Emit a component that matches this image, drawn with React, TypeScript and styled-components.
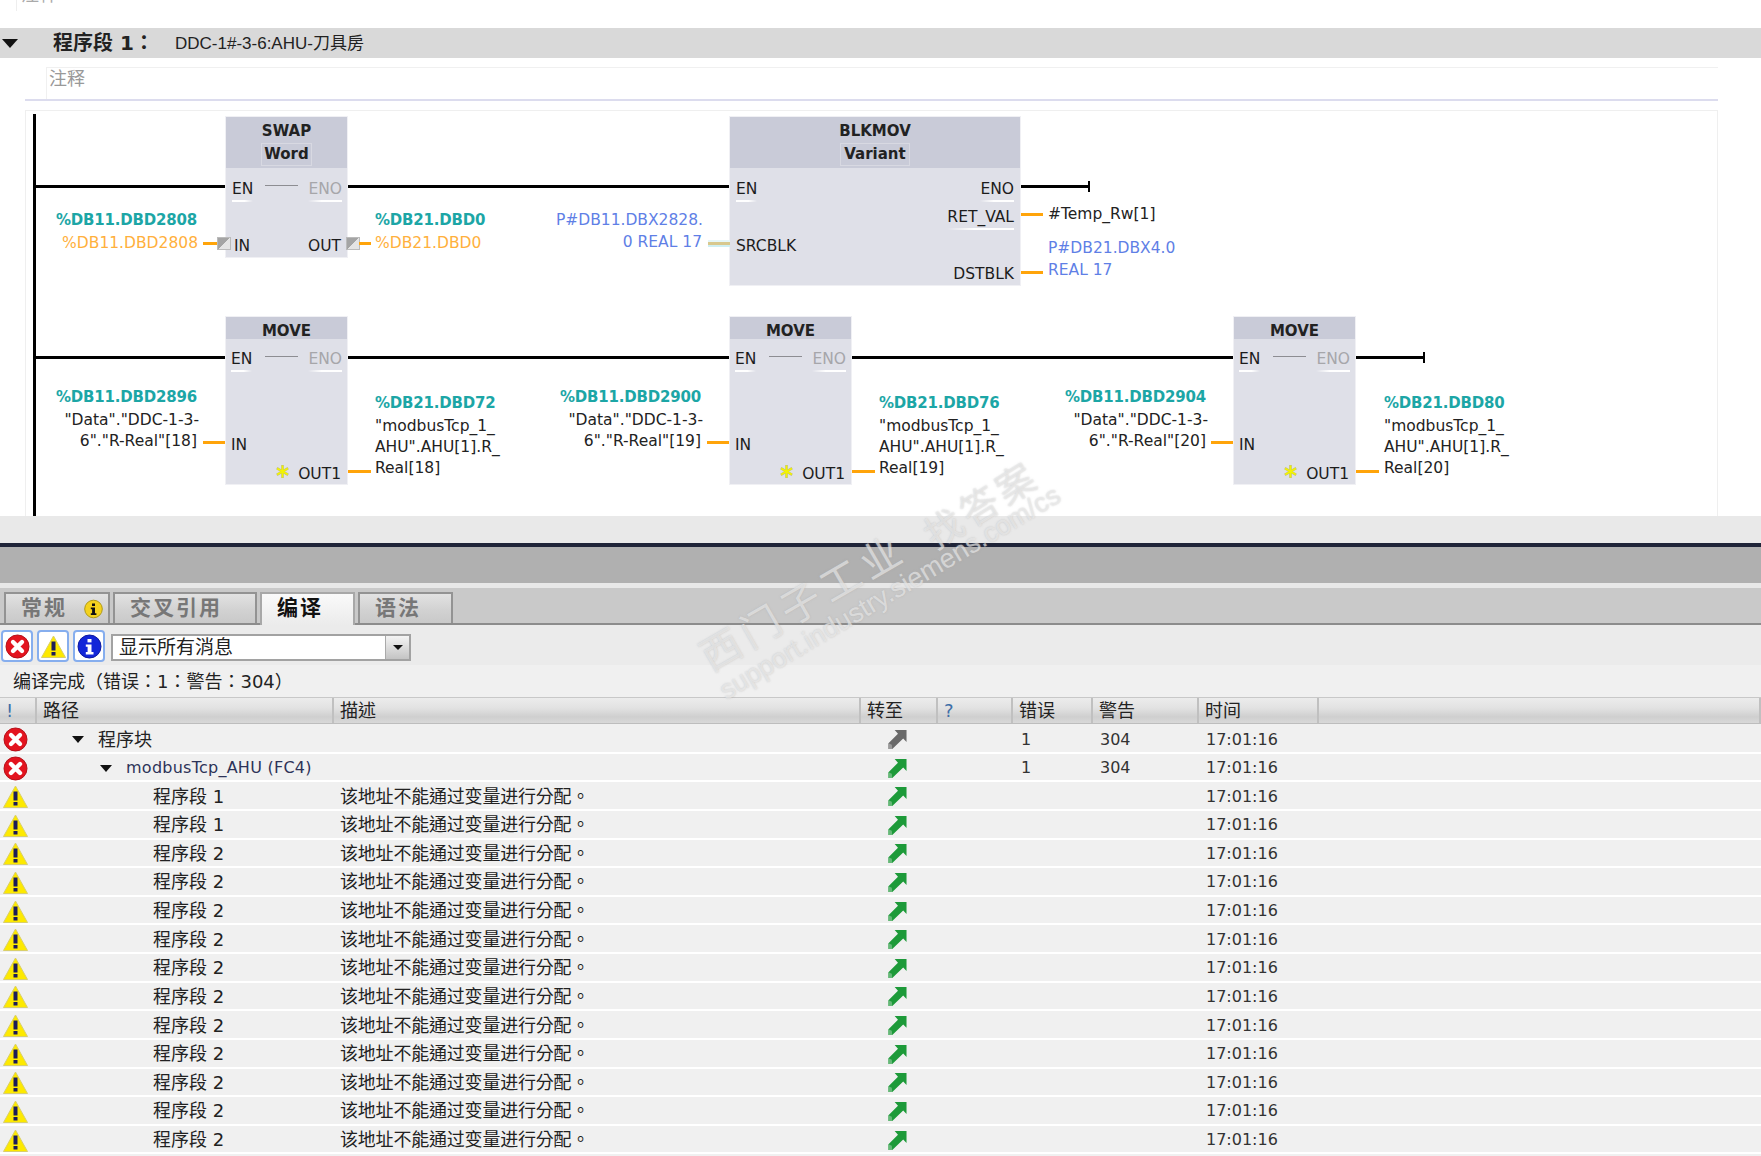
import React from "react";
import styled, { createGlobalStyle, css } from "styled-components";

const FONT = `"DejaVu Sans", "Noto Sans CJK TC", sans-serif`;
const CANVAS_W = 1693;

const Global = createGlobalStyle`
  html, body { margin: 0; padding: 0; background: #fff; }
  body { font-family: ${FONT}; color: #222; }
`;

const Page = styled.div`
  position: relative;
  width: 1761px;
  height: 1156px;
  overflow: hidden;
  display: flex;
  flex-direction: column;
  background: #fff;
`;

const TopStub = styled.div`
  height: 11px;
  margin: 0 0 17px 16px;
  padding-left: 4px;
  border-left: 1px solid #eee;
  overflow: hidden;
  color: #aaa;
  font-size: 18px;
  line-height: 20px;
`;
const TopStubText = styled.div`
  margin-top: -15px;
`;

const NetworkHeader = styled.div`
  height: 30px;
  box-sizing: border-box;
  flex: none;
  background: #d9d9d9;
  display: flex;
  align-items: center;
  padding: 0 0 3px 2px;
`;
const HeaderCaret = styled.div`
  width: 0;
  height: 0;
  border-left: 8px solid transparent;
  border-right: 8px solid transparent;
  border-top: 9px solid #111;
  margin: 3px 35px 0 0;
`;
const NetworkTitle = styled.div`
  font-size: 20px;
  font-weight: 700;
  width: 122px;
`;
const NetworkName = styled.div`
  font-family: "Liberation Sans", "Noto Sans CJK TC", sans-serif;
  font-size: 17px;
`;

const CommentBox = styled.div`
  flex: none;
  height: 31px;
  margin: 9px 43px 0 46px;
  padding-left: 2px;
  border-top: 1px solid #f0f0f0;
  border-left: 1px solid #f0f0f0;
  color: #999;
  font-size: 18px;
  line-height: 22px;
`;
const CommentDivider = styled.div`
  flex: none;
  height: 2px;
  margin: 0 43px 0 25px;
  background: #dcdcee;
`;

const Ladder = styled.div`
  position: relative;
  flex: none;
  box-sizing: border-box;
  width: ${CANVAS_W}px;
  height: 406px;
  margin: 9px 0 0 25px;
  border-top: 1px solid #efefef;
  border-left: 1px solid #efefef;
  border-right: 1px solid #efefef;
  overflow: hidden;
  font-size: 15.5px;
  line-height: 20px;
`;

const Wire = styled.div<{ $x: number; $y: number; $w: number; $h?: number; $color?: string; $glow?: boolean }>`
  position: absolute;
  left: ${(p) => p.$x - 26}px;
  top: ${(p) => p.$y - 111 - (p.$h ?? 3) / 2}px;
  width: ${(p) => p.$w}px;
  height: ${(p) => p.$h ?? 3}px;
  background: ${(p) => p.$color ?? "#000"};
  ${(p) => p.$glow && css`box-shadow: 0 2px 0 #cfeff2, 0 -2px 0 #e6f6f7;`}
`;

const Label = styled.span<{ $x?: number; $rx?: number; $y: number; $tone?: string; $bold?: boolean }>`
  position: absolute;
  top: ${(p) => p.$y - 120}px;
  white-space: nowrap;
  ${(p) => (p.$rx !== undefined ? css`right: ${CANVAS_W - 2 - (p.$rx - 26)}px;` : css`left: ${(p.$x ?? 0) - 26}px;`)}
  color: ${(p) => p.$tone ?? "#222"};
  font-weight: ${(p) => (p.$bold ? 700 : 400)};
  ${(p) => p.$bold && css`font-size: 15px; letter-spacing: -0.2px;`}
`;

const Conn = styled.div<{ $x: number; $y: number }>`
  position: absolute;
  left: ${(p) => p.$x - 26}px;
  top: ${(p) => p.$y - 111}px;
  box-sizing: border-box;
  width: 14px;
  height: 13px;
  border: 1px solid #bbb;
  background: linear-gradient(135deg, #a4a4a4 50%, #e4e4e4 50%);
`;

const Block = styled.div<{ $x: number; $y: number; $w: number; $h: number }>`
  position: absolute;
  left: ${(p) => p.$x - 26}px;
  top: ${(p) => p.$y - 111}px;
  width: ${(p) => p.$w}px;
  height: ${(p) => p.$h}px;
  background: #dfe0e8;
  box-shadow: 0 0 0 1px #f0f0f4;
`;
const BlockHead = styled.div<{ $h: number }>`
  height: ${(p) => p.$h}px;
  background: #c9cbd8;
  display: flex;
  flex-direction: column;
  align-items: center;
  padding-top: 3px;
  box-sizing: border-box;
`;
const BlockTitle = styled.div`
  font-weight: 700;
  font-size: 15px;
  line-height: 22px;
`;
const BlockType = styled.div<{ $w: number }>`
  width: ${(p) => p.$w}px;
  height: 23px;
  margin-top: 1px;
  box-sizing: border-box;
  border: 1px solid #d8d9e2;
  text-align: center;
  font-weight: 700;
  font-size: 15px;
  line-height: 21px;
`;
const Pin = styled.span<{ $l?: number; $r?: number; $y: number; $muted?: boolean; $under?: boolean }>`
  position: absolute;
  top: ${(p) => p.$y - 9}px;
  ${(p) => (p.$r !== undefined ? css`right: ${p.$r}px;` : css`left: ${p.$l ?? 6}px;`)}
  color: ${(p) => (p.$muted ? "#a6a6aa" : "#1c1c1c")};
  ${(p) =>
    p.$under &&
    css`
      &::after {
        content: "";
        position: absolute;
        left: 0;
        right: 0;
        bottom: -3px;
        height: 2px;
        background: linear-gradient(${p.$r !== undefined ? "to left" : "to right"}, #fff 60%, rgba(255, 255, 255, 0));
      }
    `}
`;
const PassLine = styled.div<{ $y: number }>`
  position: absolute;
  left: 39px;
  top: ${(p) => p.$y}px;
  width: 33px;
  height: 1px;
  background: #8d8d92;
`;
const StarMark = styled.svg`
  position: absolute;
  left: 49px;
  bottom: 5px;
`;

const LowerGap = styled.div`
  flex: none;
  height: 27px;
  background: #e9e9e9;
`;
const DarkRule = styled.div`
  flex: none;
  height: 4px;
  background: #1f2438;
`;
const GrayBand = styled.div`
  flex: none;
  height: 36px;
  background: #b0b0b0;
`;
const LightBand = styled.div`
  flex: none;
  height: 5px;
  background: #e8e8e8;
`;

const TabBar = styled.div`
  flex: none;
  height: 37px;
  box-sizing: border-box;
  background: #c9c9c9;
  border-bottom: 2px solid #8c8c8c;
  display: flex;
  align-items: flex-end;
  padding: 0 0 0 4px;
  gap: 3px;
`;
const Tab = styled.div<{ $w: number; $active?: boolean }>`
  position: relative;
  width: ${(p) => p.$w}px;
  height: ${(p) => (p.$active ? 33 : 31)}px;
  margin-bottom: ${(p) => (p.$active ? -2 : 0)}px;
  box-sizing: border-box;
  border: 2px solid #999;
  border-bottom: none;
  border-color: ${(p) => (p.$active ? "#a8a8a8" : "#939393")};
  background: ${(p) =>
    p.$active ? "linear-gradient(#fafafa, #ebebeb)" : "linear-gradient(#e2e2e2, #d2d2d2 55%, #c9c9c9)"};
  color: ${(p) => (p.$active ? "#111" : "#777")};
  font-size: 21px;
  font-weight: 700;
  letter-spacing: 2px;
  line-height: 29px;
  padding-left: 15px;
`;
const TabIcon = styled.span`
  position: absolute;
  right: 5px;
  top: 5px;
  line-height: 0;
`;

const Toolbar = styled.div`
  flex: none;
  height: 40px;
  box-sizing: border-box;
  background: #ebebeb;
  display: flex;
  align-items: center;
  padding: 2px 0 0 1px;
  gap: 4px;
`;
const ToolButton = styled.div`
  width: 32px;
  height: 32px;
  box-sizing: border-box;
  border: 2px solid #86aeee;
  border-radius: 4px;
  background: #fff;
  display: flex;
  align-items: center;
  justify-content: center;
`;
const Select = styled.div`
  width: 300px;
  height: 27px;
  box-sizing: border-box;
  margin-left: 2px;
  margin-top: 2px;
  border: 2px solid #a2a2a2;
  background: #fff;
  display: flex;
  align-items: center;
  font-size: 19px;
  padding-left: 6px;
`;
const SelectText = styled.div`
  flex: 1;
  line-height: 23px;
`;
const SelectArrow = styled.div`
  width: 24px;
  align-self: stretch;
  box-sizing: border-box;
  border-left: 1px solid #aaa;
  background: linear-gradient(#f4f4f4, #c4c4c4);
  display: flex;
  align-items: center;
  justify-content: center;
`;
const TinyCaret = styled.div`
  width: 0;
  height: 0;
  border-left: 5px solid transparent;
  border-right: 5px solid transparent;
  border-top: 5px solid #111;
`;

const StatusLine = styled.div`
  flex: none;
  height: 32px;
  background: #f0f0f0;
  padding-left: 13px;
  font-size: 18px;
  line-height: 33px;
  color: #222;
`;

const columns = css`
  display: grid;
  grid-template-columns: 37px 297px 527px 77px 75px 80px 106px 120px 1fr;
`;
const TableHead = styled.div`
  ${columns}
  flex: none;
  height: 27px;
  box-sizing: border-box;
  background: linear-gradient(#ececec, #e2e2e2 40%, #cfcfcf 75%, #d8d8d8);
  border-top: 1px solid #c8c8c8;
  border-bottom: 1px solid #bdbdbd;
`;
const HeadCell = styled.div<{ $accent?: boolean }>`
  border-right: 2px solid #c0c0c0;
  padding-left: 6px;
  font-size: 18px;
  line-height: 25px;
  color: ${(p) => (p.$accent ? "#3f6fa8" : "#222")};
`;
const Rows = styled.div`
  flex: 1;
  background: #f0f0f0;
  padding-top: 1px;
`;
const Row = styled.div`
  ${columns}
  height: 28.64px;
  box-sizing: border-box;
  background: #f0f0f0;
  border-bottom: 2px solid #fff;
  align-items: center;
  font-size: 18px;
  line-height: 24px;
  padding-top: 2px;
`;
const IconCell = styled.div`
  padding-left: 3px;
  line-height: 0;
`;
const PathCell = styled.div<{ $indent: number; $tone?: string }>`
  display: flex;
  align-items: center;
  gap: 14px;
  padding-left: ${(p) => p.$indent}px;
  color: ${(p) => p.$tone ?? "#222"};
  white-space: nowrap;
`;
const TreeCaret = styled.div`
  width: 0;
  height: 0;
  border-left: 6px solid transparent;
  border-right: 6px solid transparent;
  border-top: 7px solid #111;
`;
const LatinText = styled.span`
  font-size: 16px;
  letter-spacing: 0.25px;
`;
const DescCell = styled.div`
  padding-left: 6px;
  white-space: nowrap;
  letter-spacing: -0.2px;
`;
const GotoCell = styled.div`
  padding-left: 27px;
  line-height: 0;
`;
const NumCell = styled.div<{ $pad: number }>`
  padding-left: ${(p) => p.$pad}px;
  font-size: 16px;
  color: #333;
`;

const Watermark = styled.div<{ $cx: number; $cy: number; $deg: number; $size: number; $sans?: boolean; $gap?: number }>`
  position: absolute;
  left: ${(p) => p.$cx}px;
  top: ${(p) => p.$cy}px;
  transform: translate(-50%, -50%) rotate(${(p) => p.$deg}deg);
  white-space: nowrap;
  pointer-events: none;
  color: rgba(240, 240, 240, 0.62);
  text-shadow: 0 0 2px rgba(165, 165, 165, 0.55);
  font-size: ${(p) => p.$size}px;
  letter-spacing: ${(p) => p.$gap ?? 0}px;
  font-family: ${(p) => (p.$sans ? `"Liberation Sans", sans-serif` : `"Noto Sans CJK SC", sans-serif`)};
`;

const ErrorIcon = () => (
  <svg width="25" height="25" viewBox="0 0 25 25">
    <circle cx="12.5" cy="12.5" r="11.5" fill="#e3141f" stroke="#b5121a" />
    <path d="M8 8l9 9M17 8l-9 9" stroke="#fff" strokeWidth="4.4" strokeLinecap="round" />
  </svg>
);
const WarnIcon = () => (
  <svg width="25" height="23" viewBox="0 0 25 23">
    <path d="M12.5 1L24.5 22.5H0.5z" fill="#fde900" stroke="#d9cf6a" strokeLinejoin="round" />
    <rect x="10.5" y="6.5" width="4" height="9" fill="#1c1c5a" />
    <rect x="10.5" y="17" width="4" height="3.5" fill="#1c1c5a" />
  </svg>
);
const BlueInfoIcon = () => (
  <svg width="25" height="25" viewBox="0 0 25 25">
    <circle cx="12.5" cy="12.5" r="11.5" fill="#1226d8" stroke="#0d1aa0" />
    <rect x="10.5" y="5" width="4" height="3.4" fill="#fff" />
    <path d="M8.8 10.4h5.7v7.6h2v2.4H8.8V18h1.8v-5.2H8.8z" fill="#fff" />
  </svg>
);
const YellowInfoIcon = () => (
  <svg width="19" height="20" viewBox="0 0 19 20">
    <circle cx="9.5" cy="10" r="8.8" fill="#f4d21e" stroke="#b09a18" />
    <rect x="8" y="4.5" width="3" height="2.5" fill="#111" />
    <path d="M6.8 8.4h4.2v5.8h1.4V16H6.8v-1.8h1.3v-4H6.8z" fill="#111" />
  </svg>
);
const GotoIcon = ({ muted }: { muted?: boolean }) => (
  <svg width="19" height="21" viewBox="0 0 20 21">
    <path
      d="M7 0.5H19.5V13L16 9.5 4.5 20.5H0.5V14.5L10.5 4.5z"
      fill={muted ? "#6a6a6a" : "#1d9a39"}
    />
    <path d="M0.5 20.5V14.5L4 16 4.5 20.5z" fill={muted ? "#9a9a9a" : "#66b878"} />
  </svg>
);
const Star = () => (
  <StarMark width="15" height="15" viewBox="0 0 15 15">
    <path d="M7.5 1v13M1.8 4.2l11.4 6.6M13.2 4.2L1.8 10.8" stroke="#a8a820" strokeWidth="2.6" opacity="0.55" />
    <path d="M7.5 1.5v12M2.2 4.5l10.6 6M12.8 4.5l-10.6 6" stroke="#f4f400" strokeWidth="1.6" />
  </StarMark>
);

type PinDef = { t: string; l?: number; r?: number; y: number; muted?: boolean; under?: boolean };

function FB(props: {
  x: number; y: number; w: number; h: number; head: number;
  title: string; type?: string; typeW?: number; pass?: boolean; star?: boolean; pins: PinDef[];
}) {
  return (
    <Block $x={props.x} $y={props.y} $w={props.w} $h={props.h}>
      <BlockHead $h={props.head}>
        <BlockTitle>{props.title}</BlockTitle>
        {props.type && <BlockType $w={props.typeW ?? 50}>{props.type}</BlockType>}
      </BlockHead>
      {props.pass && <PassLine $y={props.head + 17} />}
      {props.star && <Star />}
      {props.pins.map((p) => (
        <Pin key={p.t} $l={p.l} $r={p.r} $y={p.y} $muted={p.muted} $under={p.under}>
          {p.t}
        </Pin>
      ))}
    </Block>
  );
}

const TEAL = "#1ca6a6";
const ORANGE = "#ffb03c";
const BLUE = "#5f7fe6";
const WIRE = "#ffa40a";

function MoveGroup({ x, dbIn, idx, dbOut, shift = 0 }: { x: number; dbIn: string; idx: number; dbOut: string; shift?: number }) {
  return (
    <>
      <FB
        x={x + 1} y={317} w={121} h={167} head={22} title="MOVE" pass star
        pins={[
          { t: "EN", l: 5, y: 41, under: true },
          { t: "ENO", r: 5, y: 41, muted: true, under: true },
          { t: "IN", l: 5, y: 127 },
          { t: "OUT1", r: 6, y: 156 },
        ]}
      />
      <Wire $x={x - 22} $y={442} $w={22} $color={WIRE} />
      <Wire $x={x + 123} $y={471} $w={23} $color={WIRE} />
      <Label $rx={x - 28 + shift} $y={396} $tone={TEAL} $bold>{dbIn}</Label>
      <Label $rx={x - 26 + shift} $y={419}>"Data"."DDC-1-3-</Label>
      <Label $rx={x - 28 + shift} $y={440}>6"."R-Real"[{idx}]</Label>
      <Label $x={x + 150 + shift} $y={402} $tone={TEAL} $bold>{dbOut}</Label>
      <Label $x={x + 150 + shift} $y={425}>"modbusTcp_1_</Label>
      <Label $x={x + 150 + shift} $y={446}>AHU".AHU[1].R_</Label>
      <Label $x={x + 150 + shift} $y={467}>Real[{idx}]</Label>
    </>
  );
}

function LadderDiagram() {
  return (
    <Ladder>
      <Wire $x={33} $y={315} $w={3} $h={402} />
      <Wire $x={36} $y={186} $w={694} />
      <Wire $x={36} $y={357} $w={1388} />
      <Wire $x={1020} $y={186} $w={69} />
      <Wire $x={1088} $y={186} $w={2} $h={11} />
      <Wire $x={1423} $y={357} $w={2} $h={11} />

      <FB
        x={226} y={117} w={121} h={140} head={51} title="SWAP" type="Word" typeW={51} pass
        pins={[
          { t: "EN", l: 6, y: 71, under: true },
          { t: "ENO", r: 5, y: 71, muted: true, under: true },
          { t: "IN", l: 8, y: 128 },
          { t: "OUT", r: 6, y: 128 },
        ]}
      />
      <Wire $x={203} $y={243} $w={15} $color={WIRE} />
      <Conn $x={217} $y={237} />
      <Conn $x={346} $y={237} />
      <Wire $x={359} $y={243} $w={12} $color={WIRE} />
      <Label $rx={197} $y={219} $tone={TEAL} $bold>%DB11.DBD2808</Label>
      <Label $rx={198} $y={242} $tone={ORANGE}>%DB11.DBD2808</Label>
      <Label $x={375} $y={219} $tone={TEAL} $bold>%DB21.DBD0</Label>
      <Label $x={375} $y={242} $tone={ORANGE}>%DB21.DBD0</Label>

      <FB
        x={730} y={117} w={290} h={168} head={51} title="BLKMOV" type="Variant" typeW={70}
        pins={[
          { t: "EN", l: 6, y: 71, under: true },
          { t: "ENO", r: 6, y: 71, under: true },
          { t: "RET_VAL", r: 6, y: 99, under: true },
          { t: "SRCBLK", l: 6, y: 128 },
          { t: "DSTBLK", r: 6, y: 156 },
        ]}
      />
      <Label $rx={703} $y={219} $tone={BLUE}>P#DB11.DBX2828.</Label>
      <Label $rx={702} $y={241} $tone={BLUE}>0 REAL 17</Label>
      <Wire $x={708} $y={243} $w={22} $color="#d8c88e" $glow />
      <Wire $x={1021} $y={214} $w={22} $color={WIRE} />
      <Wire $x={1021} $y={272} $w={22} $color={WIRE} />
      <Label $x={1048} $y={213}>#Temp_Rw[1]</Label>
      <Label $x={1048} $y={247} $tone={BLUE}>P#DB21.DBX4.0</Label>
      <Label $x={1048} $y={269} $tone={BLUE}>REAL 17</Label>

      <MoveGroup x={225} dbIn="%DB11.DBD2896" idx={18} dbOut="%DB21.DBD72" />
      <MoveGroup x={729} dbIn="%DB11.DBD2900" idx={19} dbOut="%DB21.DBD76" />
      <MoveGroup x={1233} dbIn="%DB11.DBD2904" idx={20} dbOut="%DB21.DBD80" shift={1} />
    </Ladder>
  );
}

const headers = ["!", "路径", "描述", "转至", "?", "错误", "警告", "时间", ""];
const netRows = ["1", "1", "2", "2", "2", "2", "2", "2", "2", "2", "2", "2", "2"];

export default function App() {
  return (
    <Page>
      <Global />
      <TopStub>
        <TopStubText>注释</TopStubText>
      </TopStub>
      <NetworkHeader>
        <HeaderCaret />
        <NetworkTitle>程序段 1：</NetworkTitle>
        <NetworkName>DDC-1#-3-6:AHU-刀具房</NetworkName>
      </NetworkHeader>
      <CommentBox>注释</CommentBox>
      <CommentDivider />
      <LadderDiagram />
      <LowerGap />
      <DarkRule />
      <GrayBand />
      <LightBand />
      <TabBar>
        <Tab $w={106}>
          常规
          <TabIcon>
            <YellowInfoIcon />
          </TabIcon>
        </Tab>
        <Tab $w={144}>交叉引用</Tab>
        <Tab $w={95} $active>编译</Tab>
        <Tab $w={95}>语法</Tab>
      </TabBar>
      <Toolbar>
        <ToolButton><ErrorIcon /></ToolButton>
        <ToolButton><WarnIcon /></ToolButton>
        <ToolButton><BlueInfoIcon /></ToolButton>
        <Select>
          <SelectText>显示所有消息</SelectText>
          <SelectArrow><TinyCaret /></SelectArrow>
        </Select>
      </Toolbar>
      <StatusLine>编译完成（错误：1：警告：304）</StatusLine>
      <TableHead>
        {headers.map((h, i) => (
          <HeadCell key={i} $accent={h === "!" || h === "?"}>{h}</HeadCell>
        ))}
      </TableHead>
      <Rows>
        <Row>
          <IconCell><ErrorIcon /></IconCell>
          <PathCell $indent={35}><TreeCaret />程序块</PathCell>
          <div />
          <GotoCell><GotoIcon muted /></GotoCell>
          <div />
          <NumCell $pad={8}>1</NumCell>
          <NumCell $pad={7}>304</NumCell>
          <NumCell $pad={7}>17:01:16</NumCell>
        </Row>
        <Row>
          <IconCell><ErrorIcon /></IconCell>
          <PathCell $indent={63} $tone="#2d3358"><TreeCaret /><LatinText>modbusTcp_AHU (FC4)</LatinText></PathCell>
          <div />
          <GotoCell><GotoIcon /></GotoCell>
          <div />
          <NumCell $pad={8}>1</NumCell>
          <NumCell $pad={7}>304</NumCell>
          <NumCell $pad={7}>17:01:16</NumCell>
        </Row>
        {netRows.map((n, i) => (
          <Row key={i}>
            <IconCell><WarnIcon /></IconCell>
            <PathCell $indent={116}>程序段 {n}</PathCell>
            <DescCell>该地址不能通过变量进行分配。</DescCell>
            <GotoCell><GotoIcon /></GotoCell>
            <div />
            <div />
            <div />
            <NumCell $pad={7}>17:01:16</NumCell>
          </Row>
        ))}
      </Rows>
      <Watermark $cx={802} $cy={600} $deg={-30} $size={40} $gap={6}>西门子工业</Watermark>
      <Watermark $cx={980} $cy={503} $deg={-32} $size={38} $gap={4}>找答案</Watermark>
      <Watermark $cx={890} $cy={593} $deg={-30.7} $size={27} $sans>support.industry.siemens.com/cs</Watermark>
    </Page>
  );
}
